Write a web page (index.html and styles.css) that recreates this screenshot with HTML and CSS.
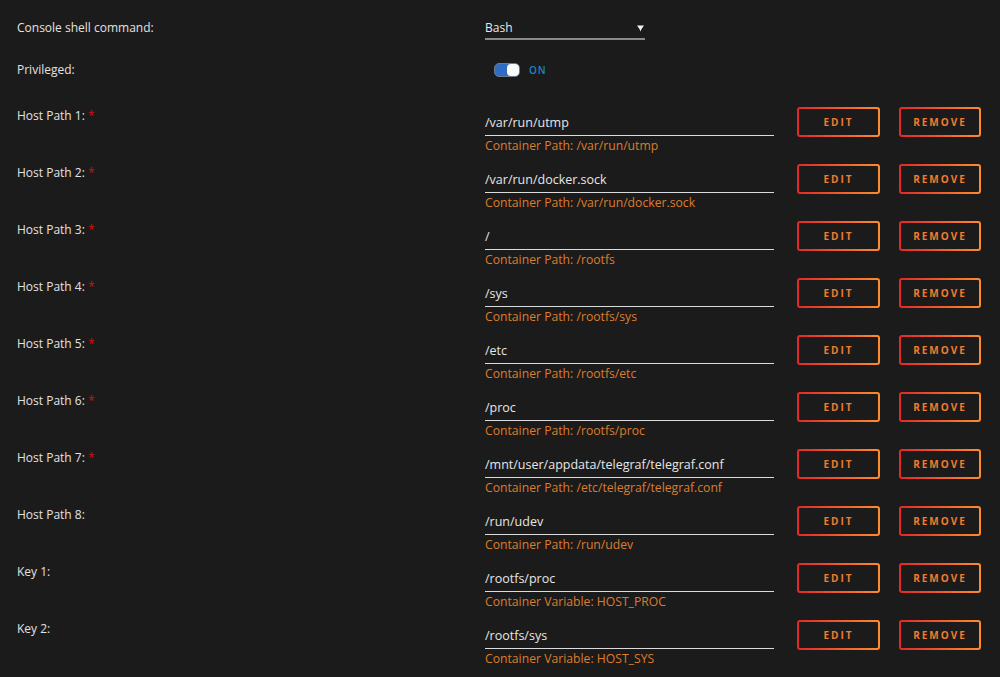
FILE: index.html
```html
<!DOCTYPE html>
<html>
<head>
<meta charset="utf-8">
<link rel="stylesheet" href="styles.css">
</head>
<body>
<div class="form">
  <div class="row row-console">
    <div class="label">Console shell command:</div>
    <div class="select"><span>Bash</span><svg class="arrow" width="7" height="7" viewBox="0 0 7 7"><path d="M0 0.5H7L4.5 4L3.5 6.5L2.5 4Z" fill="#f4f4f4"/></svg></div>
  </div>
  <div class="row row-priv">
    <div class="label">Privileged:</div>
    <div class="toggle-wrap"><span class="toggle"><span class="knob"></span></span><span class="on">ON</span></div>
  </div>

  <div class="row path">
    <div class="label">Host Path 1: <span class="req">*</span></div>
    <div class="field"><div class="input">/var/run/utmp</div><div class="hint">Container Path: /var/run/utmp</div></div>
    <div class="btns"><button class="btn edit">EDIT</button><button class="btn remove">REMOVE</button></div>
  </div>
  <div class="row path">
    <div class="label">Host Path 2: <span class="req">*</span></div>
    <div class="field"><div class="input">/var/run/docker.sock</div><div class="hint">Container Path: /var/run/docker.sock</div></div>
    <div class="btns"><button class="btn edit">EDIT</button><button class="btn remove">REMOVE</button></div>
  </div>
  <div class="row path">
    <div class="label">Host Path 3: <span class="req">*</span></div>
    <div class="field"><div class="input">/</div><div class="hint">Container Path: /rootfs</div></div>
    <div class="btns"><button class="btn edit">EDIT</button><button class="btn remove">REMOVE</button></div>
  </div>
  <div class="row path">
    <div class="label">Host Path 4: <span class="req">*</span></div>
    <div class="field"><div class="input">/sys</div><div class="hint">Container Path: /rootfs/sys</div></div>
    <div class="btns"><button class="btn edit">EDIT</button><button class="btn remove">REMOVE</button></div>
  </div>
  <div class="row path">
    <div class="label">Host Path 5: <span class="req">*</span></div>
    <div class="field"><div class="input">/etc</div><div class="hint">Container Path: /rootfs/etc</div></div>
    <div class="btns"><button class="btn edit">EDIT</button><button class="btn remove">REMOVE</button></div>
  </div>
  <div class="row path">
    <div class="label">Host Path 6: <span class="req">*</span></div>
    <div class="field"><div class="input">/proc</div><div class="hint">Container Path: /rootfs/proc</div></div>
    <div class="btns"><button class="btn edit">EDIT</button><button class="btn remove">REMOVE</button></div>
  </div>
  <div class="row path">
    <div class="label">Host Path 7: <span class="req">*</span></div>
    <div class="field"><div class="input">/mnt/user/appdata/telegraf/telegraf.conf</div><div class="hint">Container Path: /etc/telegraf/telegraf.conf</div></div>
    <div class="btns"><button class="btn edit">EDIT</button><button class="btn remove">REMOVE</button></div>
  </div>
  <div class="row path">
    <div class="label">Host Path 8:</div>
    <div class="field"><div class="input">/run/udev</div><div class="hint">Container Path: /run/udev</div></div>
    <div class="btns"><button class="btn edit">EDIT</button><button class="btn remove">REMOVE</button></div>
  </div>
  <div class="row path">
    <div class="label">Key 1:</div>
    <div class="field"><div class="input">/rootfs/proc</div><div class="hint">Container Variable: HOST_PROC</div></div>
    <div class="btns"><button class="btn edit">EDIT</button><button class="btn remove">REMOVE</button></div>
  </div>
  <div class="row path">
    <div class="label">Key 2:</div>
    <div class="field"><div class="input">/rootfs/sys</div><div class="hint">Container Variable: HOST_SYS</div></div>
    <div class="btns"><button class="btn edit">EDIT</button><button class="btn remove">REMOVE</button></div>
  </div>
</div>
</body>
</html>
```
FILE: styles.css
```css
html, body {
  margin: 0;
  padding: 0;
  background: #1c1b1b;
}
body {
  font-family: "Open Sans", "Noto Sans", sans-serif;
  font-size: 12px;
  color: #e4e4e4;
  overflow: hidden;
}
.form {
  padding: 19px 0 0 17px;
}
.row {
  display: grid;
  grid-template-columns: 468px 289px auto;
  align-items: start;
}
.label {
  line-height: 18px;
  color: #e2e2e2;
}
.req {
  color: #d01010;
}
.row-console {
  height: 42px;
}
.row-priv {
  height: 46px;
}
.select {
  width: 160px;
  box-sizing: border-box;
  display: flex;
  justify-content: space-between;
  align-items: center;
  line-height: 18px;
  padding: 0 1px 1px 0;
  border-bottom: 2px solid #8a8a8a;
  color: #e8e8e8;
}
.toggle-wrap {
  display: flex;
  align-items: center;
  gap: 9px;
  padding: 2px 0 0 9px;
}
.toggle {
  width: 26px;
  height: 14px;
  box-sizing: border-box;
  border-radius: 5px;
  background: #2f6dc2;
  border: 1px solid #6b7a90;
  display: flex;
  justify-content: flex-end;
}
.knob {
  width: 12px;
  height: 12px;
  border-radius: 4px;
  background: #fafafa;
}
.on {
  color: #1a86c8;
  font-size: 10px;
  font-weight: 600;
  letter-spacing: 1px;
}
.path {
  height: 57px;
}
.field {
  padding-top: 7px;
}
.input {
  font-size: 12.5px;
  line-height: 18px;
  padding-bottom: 3px;
  border-bottom: 1px solid #dcdcdc;
  color: #e6e6e6;
}
.hint {
  font-size: 12.2px;
  line-height: 18px;
  margin-top: 1px;
  color: #dd7d2b;
}
.btns {
  display: flex;
  gap: 19px;
  padding: 0 0 0 23px;
}
.btn {
  height: 30px;
  box-sizing: border-box;
  border: 2px solid transparent;
  border-radius: 3px;
  background: linear-gradient(#1c1b1b, #1c1b1b) padding-box,
              linear-gradient(90deg, #e22828, #ff8c2f) border-box;
  color: #f07c2c;
  font-family: "Open Sans", "Noto Sans", sans-serif;
  font-size: 10px;
  font-weight: 700;
  letter-spacing: 2px;
  padding: 0;
  cursor: pointer;
}
.edit {
  width: 83px;
}
.remove {
  width: 82px;
}
```
